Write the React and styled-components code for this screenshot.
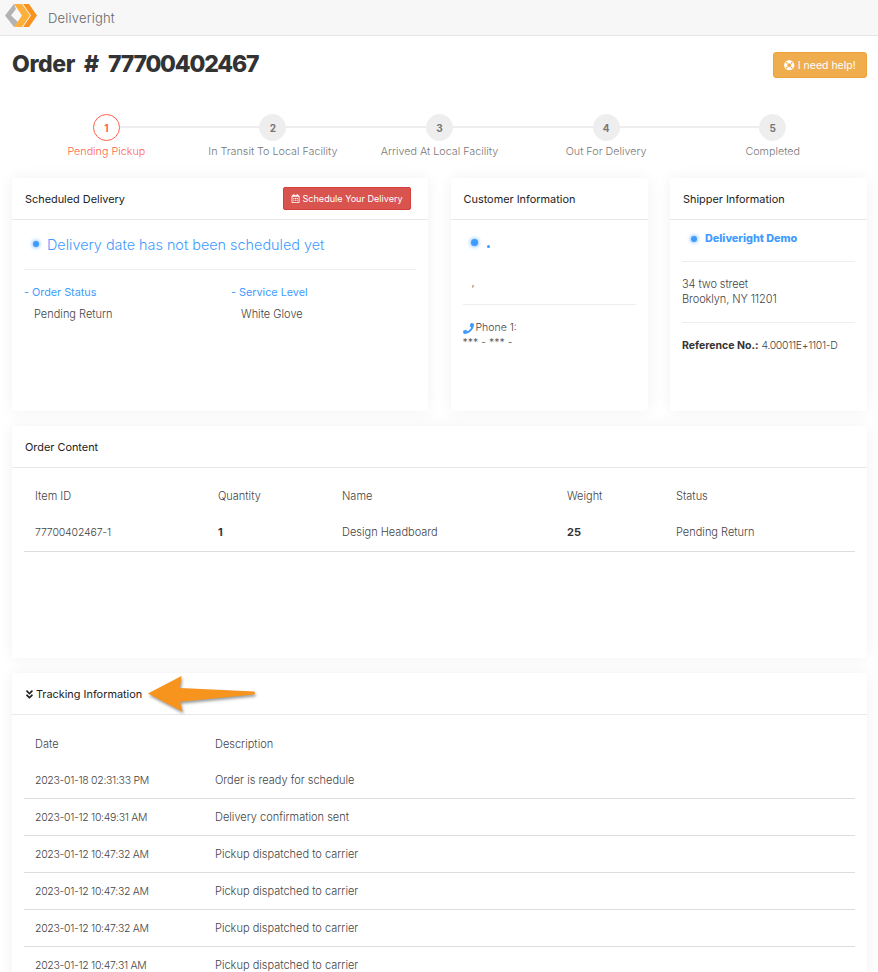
import React from 'react'
import styled, { createGlobalStyle } from 'styled-components'
import { FaLifeRing, FaRegCalendarAlt, FaAngleDoubleDown, FaPhone } from 'react-icons/fa'

const steps = [
  { n: 1, label: 'Pending Pickup', active: true },
  { n: 2, label: 'In Transit To Local Facility' },
  { n: 3, label: 'Arrived At Local Facility' },
  { n: 4, label: 'Out For Delivery' },
  { n: 5, label: 'Completed' },
]

const tracking = [
  ['2023-01-18 02:31:33 PM', 'Order is ready for schedule'],
  ['2023-01-12 10:49:31 AM', 'Delivery confirmation sent'],
  ['2023-01-12 10:47:32 AM', 'Pickup dispatched to carrier'],
  ['2023-01-12 10:47:32 AM', 'Pickup dispatched to carrier'],
  ['2023-01-12 10:47:32 AM', 'Pickup dispatched to carrier'],
  ['2023-01-12 10:47:31 AM', 'Pickup dispatched to carrier'],
]

const blue = '#3f9bff'

const Global = createGlobalStyle`
  html { overflow: hidden; }
  body {
    margin: 0;
    background: #fff;
    font-family: Inter, "Noto Sans", sans-serif;
    font-size: 11px;
    font-weight: 300;
    color: #444;
  }
`

const TopBar = styled.header`
  box-sizing: border-box;
  height: 36px;
  display: flex;
  align-items: center;
  background: #f7f7f7;
  border-bottom: 1px solid #e6e6e6;
  padding-left: 5px;
`

const Logo = styled.svg`
  width: 32px;
  height: 24px;
  margin-top: -6px;
`

const Brand = styled.span`
  margin-left: 11px;
  font-size: 13px;
  font-weight: 300;
  color: #666;
  letter-spacing: 0.2px;
`

const Main = styled.main`
  padding: 0 11px 0 12px;
`

const TitleRow = styled.div`
  display: flex;
  justify-content: space-between;
  align-items: center;
  padding-top: 16px;
  height: 26px;
`

const Title = styled.h1`
  margin: 0 0 2px;
  font-size: 23px;
  font-weight: 800;
  letter-spacing: -0.4px;
  word-spacing: 4.5px;
  color: #333;
`

const TitleNumber = styled.span`
  letter-spacing: -1.2px;
`

const HelpButton = styled.button`
  display: inline-flex;
  align-items: center;
  justify-content: center;
  gap: 3px;
  width: 94px;
  height: 26px;
  padding: 0;
  font: inherit;
  font-size: 10.5px;
  font-weight: 400;
  color: #fff;
  background: #f0ad4e;
  border: 1px solid #eea236;
  border-radius: 3px;
`

const Stepper = styled.ol`
  list-style: none;
  margin: 36px 0 0;
  padding: 0 0 0 11px;
  width: 833px;
  display: grid;
  grid-template-columns: repeat(5, 1fr);
`

const Step = styled.li`
  position: relative;
  display: flex;
  flex-direction: column;
  align-items: center;
  gap: 4px;
  height: 64px;
  font-size: 10.75px;
  color: ${p => (p.$active ? '#ff5f4a' : '#777')};

  &:not(:last-child)::after {
    content: '';
    position: absolute;
    top: 12px;
    left: 50%;
    width: 100%;
    height: 2px;
    background: #eee;
  }
`

const StepNumber = styled.span`
  position: relative;
  z-index: 1;
  box-sizing: border-box;
  width: 27px;
  height: 27px;
  display: flex;
  align-items: center;
  justify-content: center;
  border-radius: 50%;
  font-size: 10px;
  font-weight: 700;
  background: ${p => (p.$active ? '#fff' : '#eee')};
  border: 1px solid ${p => (p.$active ? '#ff5f4a' : '#eee')};
  color: ${p => (p.$active ? '#ff5f4a' : '#777')};
`

const InfoGrid = styled.div`
  display: grid;
  grid-template-columns: 416px 197px 197px;
  justify-content: space-between;
  height: 233px;
`

const Card = styled.section`
  position: relative;
  background: #fff;
  border-radius: 3px;
  box-shadow: 0 0 16px rgba(0, 0, 0, 0.06);
  margin-top: ${p => p.$gap || 0}px;
  height: ${p => (p.$height ? `${p.$height}px` : 'auto')};
`

const CardHead = styled.div`
  box-sizing: border-box;
  height: 42px;
  display: flex;
  align-items: center;
  justify-content: space-between;
  padding: ${p => (p.$flush ? 0 : 1)}px 17px 0 13px;
  border-bottom: 1px solid #e9e9e9;
  font-size: 10.9px;
  font-weight: 400;
  color: #222;
`

const HeadTitle = styled.span`
  display: inline-flex;
  align-items: center;
  gap: 1px;
  svg {
    margin-left: -1px;
  }
`

const ScheduleButton = styled.button`
  display: inline-flex;
  align-items: center;
  justify-content: center;
  gap: 2px;
  width: 128px;
  height: 23px;
  margin-top: -1px;
  padding: 0;
  font: inherit;
  font-size: 9.1px;
  font-weight: 400;
  color: #fff;
  background: #d9534f;
  border: 1px solid #d43f3a;
  border-radius: 2px;
`

const CardBody = styled.div`
  padding: 0 12px;
`

const Dot = styled.i`
  display: inline-block;
  flex: none;
  width: ${p => p.$size || 6}px;
  height: ${p => p.$size || 6}px;
  border-radius: 50%;
  background: ${blue};
  box-shadow: 0 0 4px ${blue};
`

const Headline = styled.div`
  box-sizing: border-box;
  height: 49px;
  display: flex;
  align-items: center;
  gap: 8px;
  margin-top: 1px;
  padding: 0 0 2px 9px;
  font-size: 14.4px;
  font-weight: 300;
  color: ${blue};
  border-bottom: 1px solid #eee;
`

const Facts = styled.div`
  display: grid;
  grid-template-columns: 207px 1fr;
  padding-top: 15px;
`

const FactLabel = styled.div`
  color: ${blue};
  font-size: 10.8px;
  font-weight: 400;
  line-height: 16px;
`

const FactValue = styled.div`
  margin: 5px 0 0 10px;
  line-height: 16px;
`

const DotRow = styled.div`
  box-sizing: border-box;
  display: flex;
  align-items: center;
  gap: ${p => p.$gap}px;
  height: 42px;
  padding: ${p => (p.$rule ? '0 0 4px 9px' : '2px 0 0 8px')};
  border-bottom: ${p => (p.$rule ? '1px solid #eee' : 'none')};
`

const SmallDot = styled.i`
  display: inline-block;
  width: 3px;
  height: 3px;
  margin-top: 9px;
  border-radius: 50%;
  background: ${blue};
`

const Comma = styled.div`
  box-sizing: border-box;
  height: 43px;
  padding: 12px 0 0 9px;
  line-height: 16px;
  border-bottom: 1px solid #eee;
`

const Phone = styled.div`
  display: flex;
  align-items: center;
  gap: 2px;
  margin-top: 15px;
  font-size: 10.5px;
  line-height: 16px;
  svg {
    color: ${blue};
    font-size: 11px;
  }
`

const Masked = styled.div`
  font-size: 10.5px;
  line-height: 13px;
`

const ShipperName = styled.span`
  font-size: 10.8px;
  font-weight: 800;
  color: ${blue};
`

const Address = styled.div`
  box-sizing: border-box;
  height: 61px;
  padding-top: 15px;
  line-height: 15px;
  letter-spacing: -0.1px;
  border-bottom: 1px solid #eee;
`

const Reference = styled.div`
  padding-top: 15px;
  font-size: 10.5px;
  line-height: 16px;
  b {
    font-weight: 700;
    color: #333;
  }
`

const Figures = styled.span`
  font-size: 10.5px;
  letter-spacing: ${p => p.$tight}px;
`

const Table = styled.div`
  padding: 11px 12px 0;
`

const Row = styled.div`
  box-sizing: border-box;
  display: grid;
  grid-template-columns: ${p => p.$cols};
  align-items: center;
  height: ${p => (p.$head ? 36 : 37)}px;
  padding: 0 0 ${p => (p.$lift ? 2 : 0)}px 11px;
  border-bottom: ${p => (p.$head ? 'none' : '1px solid #ddd')};
`

const Strong = styled.b`
  font-weight: 700;
  color: #333;
`

const Arrow = styled.svg`
  position: absolute;
  left: 130px;
  top: 0;
  width: 130px;
  height: 50px;
  filter: drop-shadow(1px 2px 1.5px rgba(0, 0, 0, 0.4));
`

const orderCols = '183px 124px 225px 109px 1fr'
const trackCols = '180px 1fr'

export default function App() {
  return (
    <>
      <Global />
      <TopBar>
        <Logo viewBox="5 2 32 24">
          <path d="M14 3 L5 14.5 L14 26 L18 21 L11 14.5 L16 8 Z" fill="#b3b3b3" />
          <path d="M14 3 H22 L30 14.5 L22 26 H14 L22 14.5 Z" fill="#fbb03b" />
          <path d="M23 3 H29 L37 14.5 L29 26 H23 L31 14.5 Z" fill="#f7931e" />
        </Logo>
        <Brand>Deliveright</Brand>
      </TopBar>
      <Main>
        <TitleRow>
          <Title>Order # <TitleNumber>77700402467</TitleNumber></Title>
          <HelpButton><FaLifeRing /> I need help!</HelpButton>
        </TitleRow>
        <Stepper>
          {steps.map(({ n, label, active }) => (
            <Step key={n} $active={active}>
              <StepNumber $active={active}>{n}</StepNumber>
              {label}
            </Step>
          ))}
        </Stepper>
        <InfoGrid>
          <Card>
            <CardHead>
              Scheduled Delivery
              <ScheduleButton><FaRegCalendarAlt /> Schedule Your Delivery</ScheduleButton>
            </CardHead>
            <CardBody>
              <Headline><Dot />Delivery date has not been scheduled yet</Headline>
              <Facts>
                <div>
                  <FactLabel>- Order Status</FactLabel>
                  <FactValue>Pending Return</FactValue>
                </div>
                <div>
                  <FactLabel>- Service Level</FactLabel>
                  <FactValue>White Glove</FactValue>
                </div>
              </Facts>
            </CardBody>
          </Card>
          <Card>
            <CardHead>Customer Information</CardHead>
            <CardBody>
              <DotRow $gap={9}><Dot $size={7} /><SmallDot /></DotRow>
              <Comma>,</Comma>
              <Phone><FaPhone /> Phone 1:</Phone>
              <Masked>*** - *** -</Masked>
            </CardBody>
          </Card>
          <Card>
            <CardHead>Shipper Information</CardHead>
            <CardBody>
              <DotRow $gap={8} $rule><Dot /><ShipperName>Deliveright Demo</ShipperName></DotRow>
              <Address>34 two street<br />Brooklyn, NY 11201</Address>
              <Reference><b>Reference No.:</b> <Figures $tight={-0.33}>4.00011E+1101-D</Figures></Reference>
            </CardBody>
          </Card>
        </InfoGrid>
        <Card $gap={15} $height={232}>
          <CardHead $flush>Order Content</CardHead>
          <Table>
            <Row $head $lift $cols={orderCols}>
              <span>Item ID</span><span>Quantity</span><span>Name</span><span>Weight</span><span>Status</span>
            </Row>
            <Row $lift $cols={orderCols}>
              <Figures $tight={-0.15}>77700402467-1</Figures><Strong>1</Strong><span>Design Headboard</span><Strong>25</Strong><span>Pending Return</span>
            </Row>
          </Table>
        </Card>
        <Card $gap={15}>
          <CardHead>
            <HeadTitle><FaAngleDoubleDown /> Tracking Information</HeadTitle>
          </CardHead>
          <Table>
            <Row $head $cols={trackCols}>
              <span>Date</span><span>Description</span>
            </Row>
            {tracking.map(([date, text], i) => (
              <Row key={i} $cols={trackCols}>
                <Figures $tight={-0.3}>{date}</Figures><span>{text}</span>
              </Row>
            ))}
          </Table>
          <Arrow viewBox="0 0 130 50">
            <path
              d="M6 20.5 L39.5 3 L38 15 L112 18.5 Q114 20 112 21.5 L38 28.7 L40.7 38.7 Z"
              fill="#f7941d"
            />
          </Arrow>
        </Card>
      </Main>
    </>
  )
}
